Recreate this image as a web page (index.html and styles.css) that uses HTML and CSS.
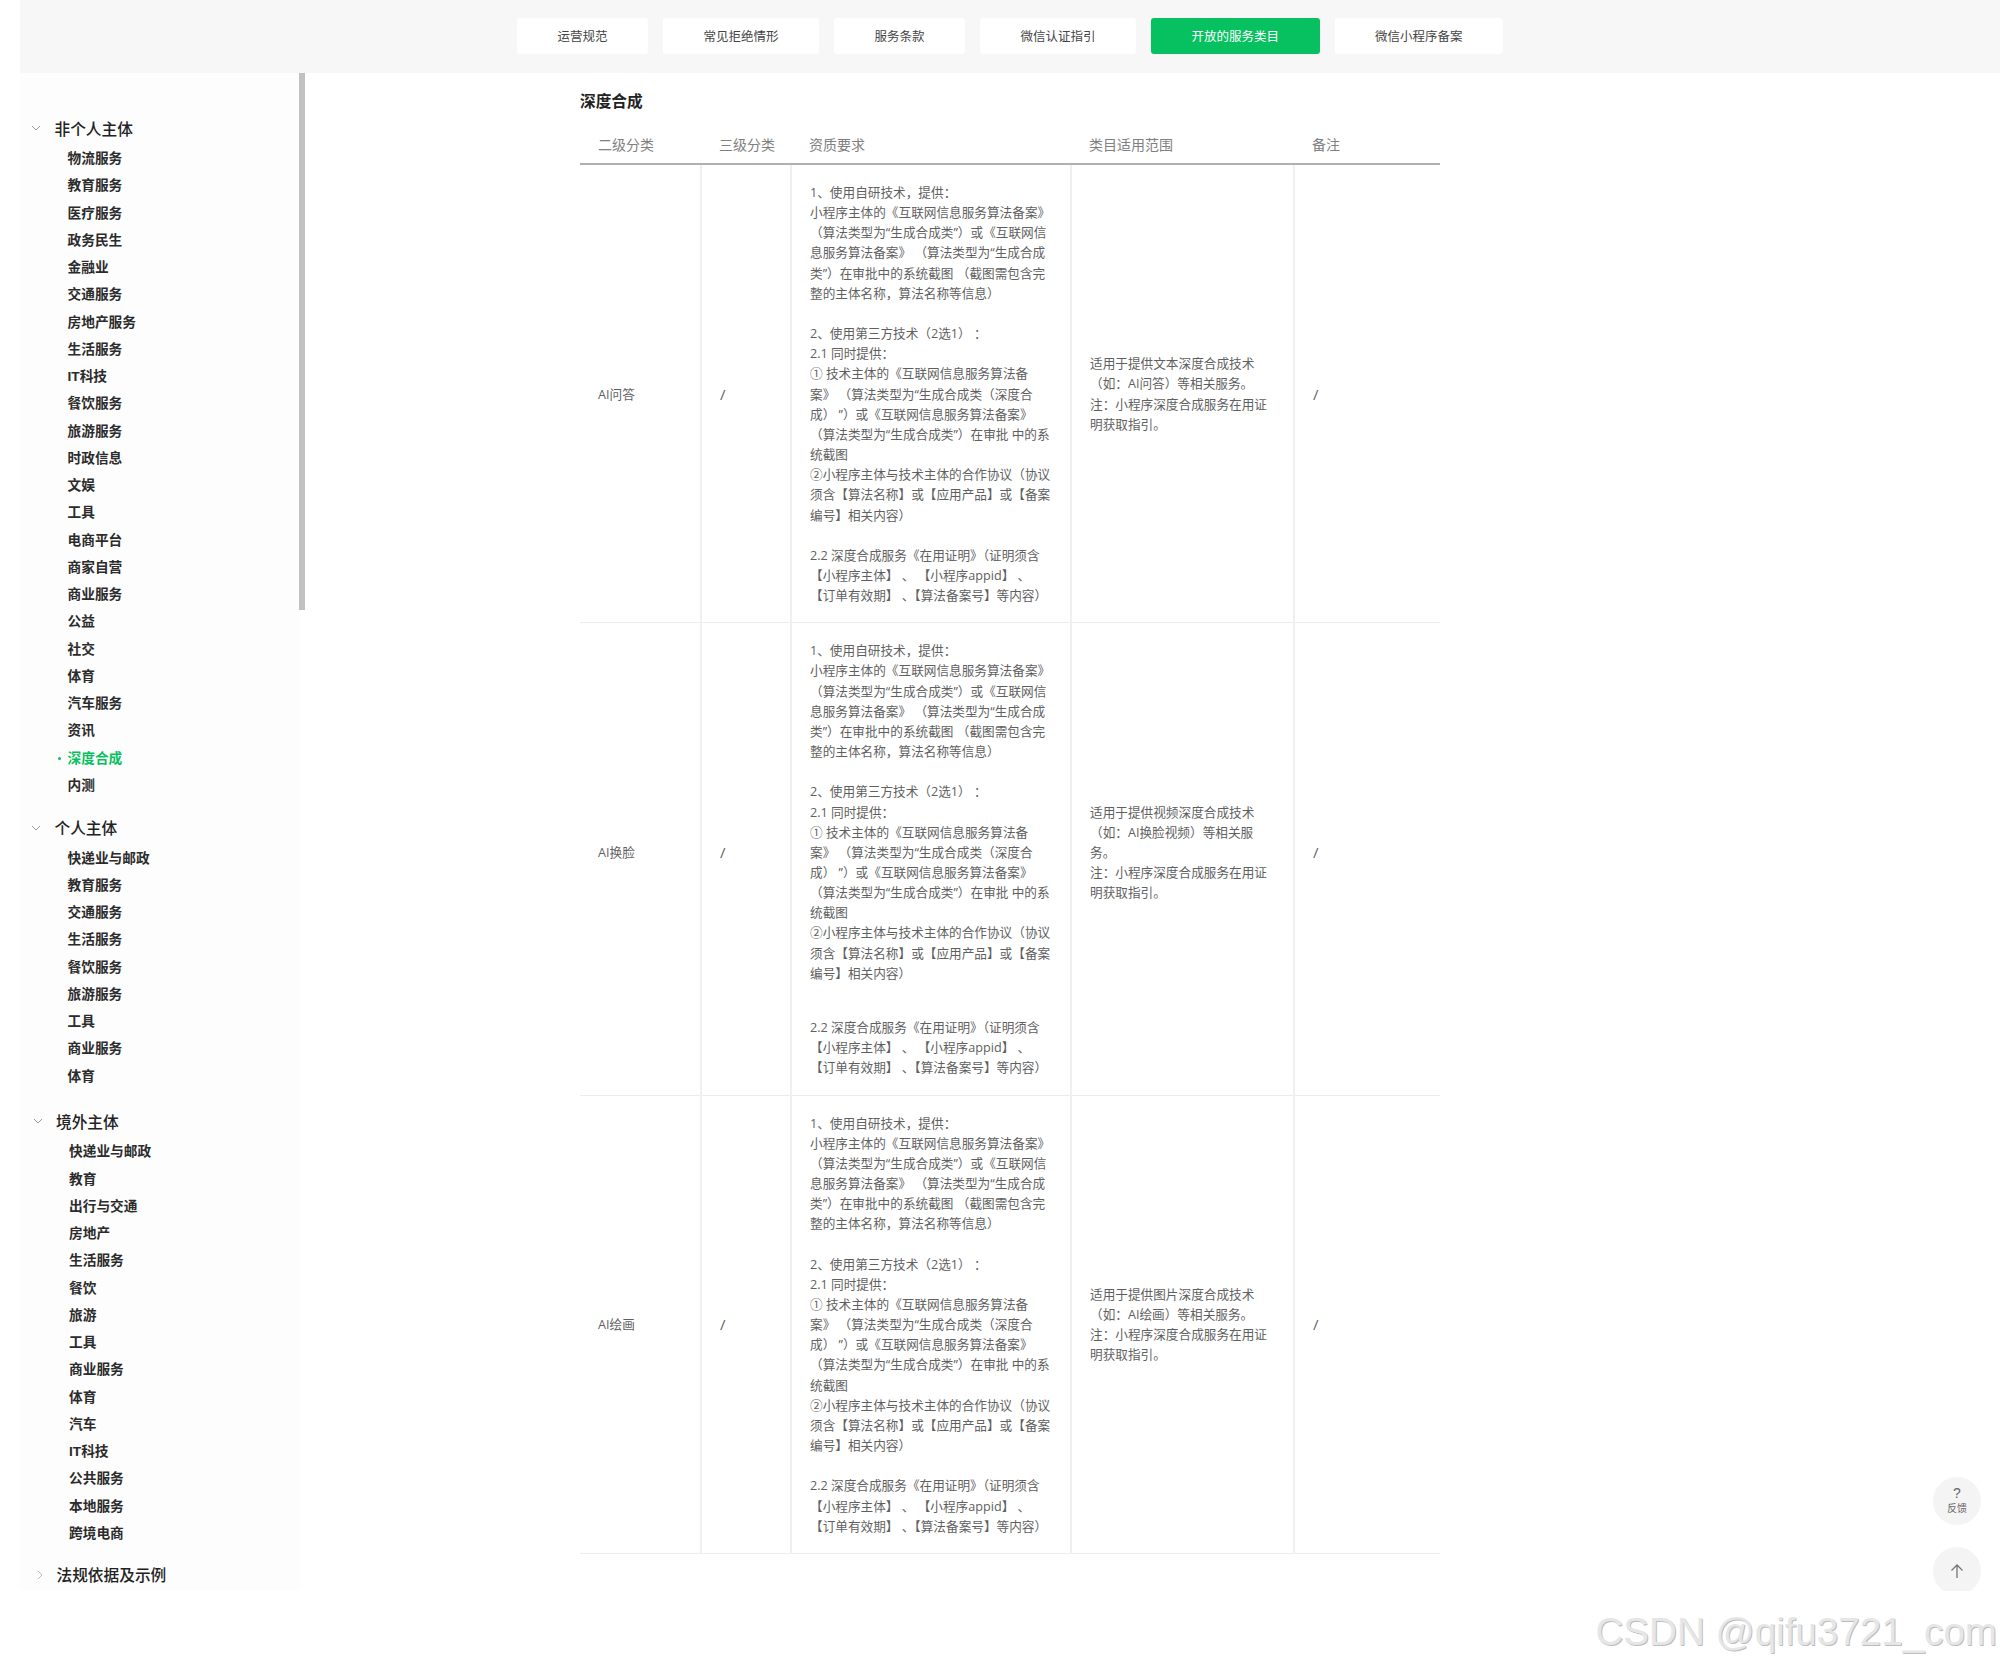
FILE: index.html
```html
<!DOCTYPE html>
<html lang="zh-CN">
<head>
<meta charset="utf-8">
<title>开放的服务类目</title>
<link rel="stylesheet" href="styles.css">
</head>
<body>
<header class="topbar">
  <nav class="tabs">
    <a class="tab">运营规范</a>
    <a class="tab">常见拒绝情形</a>
    <a class="tab">服务条款</a>
    <a class="tab">微信认证指引</a>
    <a class="tab tab-active">开放的服务类目</a>
    <a class="tab">微信小程序备案</a>
  </nav>
</header>
<div class="main">
  <aside class="sidebar">
    <div class="scrollbar"></div>
    <section class="group">
      <h3 class="group-title"><svg class="chev" viewBox="0 0 10 6"><path d="M1 1l4 4 4-4"/></svg>非个人主体</h3>
      <ul class="items">
        <li>物流服务</li><li>教育服务</li><li>医疗服务</li><li>政务民生</li><li>金融业</li><li>交通服务</li><li>房地产服务</li><li>生活服务</li><li>IT科技</li><li>餐饮服务</li><li>旅游服务</li><li>时政信息</li><li>文娱</li><li>工具</li><li>电商平台</li><li>商家自营</li><li>商业服务</li><li>公益</li><li>社交</li><li>体育</li><li>汽车服务</li><li>资讯</li><li class="active">深度合成</li><li>内测</li>
      </ul>
    </section>
    <section class="group group-personal">
      <h3 class="group-title"><svg class="chev" viewBox="0 0 10 6"><path d="M1 1l4 4 4-4"/></svg>个人主体</h3>
      <ul class="items">
        <li>快递业与邮政</li><li>教育服务</li><li>交通服务</li><li>生活服务</li><li>餐饮服务</li><li>旅游服务</li><li>工具</li><li>商业服务</li><li>体育</li>
      </ul>
    </section>
    <section class="group group-shift">
      <h3 class="group-title"><svg class="chev" viewBox="0 0 10 6"><path d="M1 1l4 4 4-4"/></svg>境外主体</h3>
      <ul class="items">
        <li>快递业与邮政</li><li>教育</li><li>出行与交通</li><li>房地产</li><li>生活服务</li><li>餐饮</li><li>旅游</li><li>工具</li><li>商业服务</li><li>体育</li><li>汽车</li><li>IT科技</li><li>公共服务</li><li>本地服务</li><li>跨境电商</li>
      </ul>
    </section>
    <section class="group group-shift">
      <h3 class="group-title"><svg class="chev chev-right" viewBox="0 0 6 10"><path d="M1 1l4 4-4 4"/></svg>法规依据及示例</h3>
    </section>
  </aside>
  <main class="content">
    <h2 class="title">深度合成</h2>
    <table class="table">
      <colgroup><col class="c1"><col class="c2"><col class="c3"><col class="c4"><col class="c5"></colgroup>
      <thead>
        <tr><th>二级分类</th><th>三级分类</th><th>资质要求</th><th>类目适用范围</th><th>备注</th></tr>
      </thead>
      <tbody>
        <tr>
          <td>AI问答</td>
          <td class="slash">/</td>
          <td class="req">1、使用自研技术，提供：<br>小程序主体的《互联网信息服务算法备案》<br>（算法类型为“生成合成类”）或《互联网信<br>息服务算法备案》 （算法类型为“生成合成<br>类”）在审批中的系统截图 （截图需包含完<br>整的主体名称，算法名称等信息）<br><br>2、使用第三方技术（2选1） ：<br>2.1 同时提供：<br>① 技术主体的《互联网信息服务算法备<br>案》 （算法类型为“生成合成类（深度合<br>成） ”）或《互联网信息服务算法备案》<br>（算法类型为“生成合成类”）在审批 中的系<br>统截图<br>②小程序主体与技术主体的合作协议（协议<br>须含【算法名称】或【应用产品】或【备案<br>编号】相关内容）<br><br>2.2 深度合成服务《在用证明》（证明须含<br>【小程序主体】 、 【小程序appid】 、<br>【订单有效期】 、【算法备案号】等内容）</td>
          <td>适用于提供文本深度合成技术<br>（如：AI问答）等相关服务。<br>注：小程序深度合成服务在用证<br>明获取指引。</td>
          <td class="slash">/</td>
        </tr>
        <tr class="row-tall">
          <td>AI换脸</td>
          <td class="slash">/</td>
          <td class="req">1、使用自研技术，提供：<br>小程序主体的《互联网信息服务算法备案》<br>（算法类型为“生成合成类”）或《互联网信<br>息服务算法备案》 （算法类型为“生成合成<br>类”）在审批中的系统截图 （截图需包含完<br>整的主体名称，算法名称等信息）<br><br>2、使用第三方技术（2选1） ：<br>2.1 同时提供：<br>① 技术主体的《互联网信息服务算法备<br>案》 （算法类型为“生成合成类（深度合<br>成） ”）或《互联网信息服务算法备案》<br>（算法类型为“生成合成类”）在审批 中的系<br>统截图<br>②小程序主体与技术主体的合作协议（协议<br>须含【算法名称】或【应用产品】或【备案<br>编号】相关内容）<br><br><span class="gap"></span>2.2 深度合成服务《在用证明》（证明须含<br>【小程序主体】 、 【小程序appid】 、<br>【订单有效期】 、【算法备案号】等内容）</td>
          <td>适用于提供视频深度合成技术<br>（如：AI换脸视频）等相关服<br>务。<br>注：小程序深度合成服务在用证<br>明获取指引。</td>
          <td class="slash">/</td>
        </tr>
        <tr>
          <td>AI绘画</td>
          <td class="slash">/</td>
          <td class="req">1、使用自研技术，提供：<br>小程序主体的《互联网信息服务算法备案》<br>（算法类型为“生成合成类”）或《互联网信<br>息服务算法备案》 （算法类型为“生成合成<br>类”）在审批中的系统截图 （截图需包含完<br>整的主体名称，算法名称等信息）<br><br>2、使用第三方技术（2选1） ：<br>2.1 同时提供：<br>① 技术主体的《互联网信息服务算法备<br>案》 （算法类型为“生成合成类（深度合<br>成） ”）或《互联网信息服务算法备案》<br>（算法类型为“生成合成类”）在审批 中的系<br>统截图<br>②小程序主体与技术主体的合作协议（协议<br>须含【算法名称】或【应用产品】或【备案<br>编号】相关内容）<br><br>2.2 深度合成服务《在用证明》（证明须含<br>【小程序主体】 、 【小程序appid】 、<br>【订单有效期】 、【算法备案号】等内容）</td>
          <td>适用于提供图片深度合成技术<br>（如：AI绘画）等相关服务。<br>注：小程序深度合成服务在用证<br>明获取指引。</td>
          <td class="slash">/</td>
        </tr>
      </tbody>
    </table>
  </main>
</div>
<button class="fab fab-feedback"><span class="fab-q">?</span><span class="fab-label">反馈</span></button>
<button class="fab fab-top"><svg class="fab-arrow" viewBox="0 0 14 16"><path d="M7 15V2M1.500 7.500L7 2l5.500 5.500"/></svg></button>
<div class="watermark">CSDN @qifu3721_com</div>
</body>
</html>
```

FILE: styles.css
```css
* { box-sizing: border-box; }
html, body { margin: 0; padding: 0; }
body {
  position: relative;
  width: 2000px;
  height: 1667px;
  overflow: hidden;
  background: #fff;
  font-family: "Liberation Sans", "Noto Sans CJK SC", sans-serif;
  color: #333;
}
.topbar {
  margin-left: 20px;
  height: 73px;
  padding-top: 18px;
  background: #f7f7f7;
}
.tabs { display: flex; justify-content: center; gap: 15px; }
.tab {
  display: flex;
  align-items: center;
  height: 36px;
  padding: 0 40.500px 2px;
  background: #fff;
  border-radius: 3px;
  font-size: 12.500px;
  color: #444;
}
.tab-active { background: #07c160; color: #fff; }
.main { display: flex; }
.sidebar {
  position: relative;
  margin-left: 20px;
  width: 280px;
  height: 1517px;
  padding: 40px 0 0 11px;
  background: #fdfdfd;
}
.scrollbar {
  position: absolute;
  top: 0;
  left: 279px;
  width: 6px;
  height: 537px;
  background: #c1c1c1;
}
.group { margin-bottom: 13.500px; }
.group-personal { margin-bottom: 16.500px; }
.group-shift { padding-left: 1.500px; margin-bottom: 12.500px; }
.group-title {
  display: flex;
  align-items: center;
  margin: 0;
  height: 32px;
  padding-bottom: 2px;
  font-size: 15.700px;
  font-weight: 500;
  color: #222;
}
.chev {
  width: 10px;
  height: 6px;
  margin-right: 13.500px;
  fill: none;
  stroke: #999;
  stroke-width: 1;
}
.chev-right { width: 6px; height: 10px; margin: 0 14px 0 4px; stroke: #bbb; }
.items { list-style: none; margin: 0; padding: 0 0 0 36.500px; }
.items li {
  position: relative;
  height: 27.260px;
  line-height: 27.260px;
  font-size: 13.700px;
  font-weight: 700;
  color: #2b2b2b;
}
.items .active { color: #07c160; }
.items .active::before {
  content: "";
  position: absolute;
  left: -10px;
  top: 12px;
  width: 3px;
  height: 3px;
  border-radius: 50%;
  background: #07c160;
}
.content { margin-left: 280px; width: 860px; }
.title {
  margin: 0;
  padding-top: 18px;
  height: 54px;
  line-height: 22px;
  font-size: 15.700px;
  font-weight: 700;
  color: #222;
}
.table {
  width: 860px;
  table-layout: fixed;
  border-collapse: collapse;
  font-family: "Open Sans", "Noto Sans CJK SC", sans-serif;
  font-size: 12.650px;
  line-height: 20.150px;
  color: #5f5f5f;
}
.c1 { width: 121px; }
.c2 { width: 90px; }
.c3 { width: 280px; }
.c4 { width: 223px; }
.c5 { width: 146px; }
.table th {
  height: 37px;
  padding: 0 18px;
  text-align: left;
  white-space: nowrap;
  font-size: 14px;
  font-weight: 400;
  color: #808080;
  border-bottom: 2px solid #b0b0b0;
}
.table td {
  padding: 17px 18px;
  vertical-align: middle;
  white-space: nowrap;
  border-bottom: 1px solid #ececec;
  border-right: 2px solid #f0f0f0;
}
.table td:last-child { border-right: 0; }
.table td.slash { font-size: 15px; }
.table .row-tall td { padding-bottom: 31px; }
.table .row-tall td.req { padding-bottom: 17px; }
.gap { display: block; height: 14px; }
.fab {
  position: absolute;
  left: 1933px;
  width: 48px;
  height: 48px;
  padding: 0;
  border: 0;
  border-radius: 50%;
  background: #f4f4f4;
  display: flex;
  flex-direction: column;
  align-items: center;
  justify-content: center;
  color: #666;
  font-family: inherit;
}
.fab-feedback { top: 1477px; }
.fab-top { top: 1547px; }
.fab-q { font-size: 14px; line-height: 14px; }
.fab-label { margin-top: 2px; font-size: 10px; line-height: 14px; }
.fab-arrow { width: 14px; height: 16px; fill: none; stroke: #777; stroke-width: 1.300; }
.watermark {
  position: absolute;
  right: 0;
  bottom: 0;
  width: 420px;
  height: 76px;
  padding: 17px 3px 0 0;
  background: #fff;
  text-align: right;
  white-space: nowrap;
  font-family: "Liberation Sans", sans-serif;
  font-size: 38.600px;
  line-height: 48px;
  color: #e6e6e6;
  text-shadow: 1px 1px 0 #bdbdbd;
}
```
